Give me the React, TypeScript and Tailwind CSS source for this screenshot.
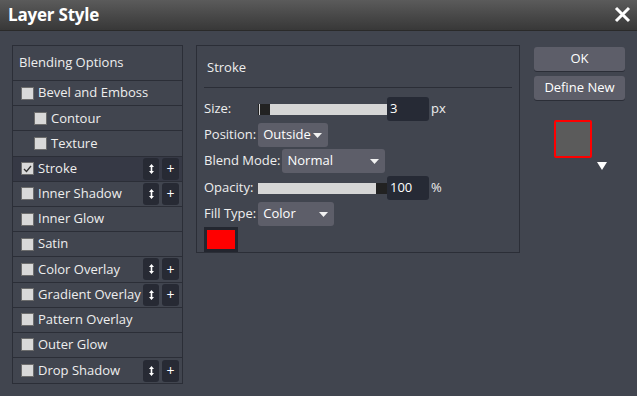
import React from 'react'

type Row = { name: string; indent?: boolean; checked?: boolean; active?: boolean; tools?: boolean }

const rows: Row[] = [
  { name: 'Bevel and Emboss' },
  { name: 'Contour', indent: true },
  { name: 'Texture', indent: true },
  { name: 'Stroke', checked: true, active: true, tools: true },
  { name: 'Inner Shadow', tools: true },
  { name: 'Inner Glow' },
  { name: 'Satin' },
  { name: 'Color Overlay', tools: true },
  { name: 'Gradient Overlay', tools: true },
  { name: 'Pattern Overlay' },
  { name: 'Outer Glow' },
  { name: 'Drop Shadow', tools: true },
]

const Caret = () => (
  <svg width="9" height="5" viewBox="0 0 9 5" className="shrink-0">
    <path d="M0 0h9L4.5 5z" fill="#f2f2f2" />
  </svg>
)

const CheckBox: React.FC<{ checked?: boolean }> = ({ checked }) => (
  <div className="w-[13px] h-[13px] bg-[#d9d9d9] border border-[#6d6d6d] flex items-center justify-center shrink-0">
    {checked && (
      <svg width="9" height="8" viewBox="0 0 9 8">
        <path d="M1 4l2.5 2.5L8 1" stroke="#333" strokeWidth="1.3" fill="none" />
      </svg>
    )}
  </div>
)

const Dropdown: React.FC<{ label: string; w: string }> = ({ label, w }) => (
  <div className={`${w} h-[24px] bg-[#5d5e69] rounded-[3px] flex items-center justify-between pl-[5px] pr-[6px] text-white`}>
    <span>{label}</span>
    <Caret />
  </div>
)

const NumBox: React.FC<{ value: string }> = ({ value }) => (
  <div className="w-[42px] h-[24px] bg-[#262a35] rounded-[3px] flex items-center px-[3px] text-white">{value}</div>
)

export default function App() {
  return (
    <div className="w-[637px] h-[396px] bg-[#41454f] text-[13px] text-[#eeeeee] overflow-hidden" style={{ fontFamily: '"Open Sans", "Noto Sans", sans-serif' }}>
      <div className="h-[31px] bg-gradient-to-b from-[#5b5b5b] to-[#383838] border-b border-[#2a2a2a] flex items-center justify-between pl-[8px] pr-[6px]">
        <span className="text-[17px] font-bold text-white tracking-[-0.2px]">Layer Style</span>
        <svg width="17" height="17" viewBox="0 0 17 17" className="mb-[2px]">
          <path d="M2 2L15 15M15 2L2 15" stroke="#fff" strokeWidth="3" />
        </svg>
      </div>

      <div className="flex items-start pl-[12px] pt-[14px]">
        <div className="w-[171px] border border-[#2b2e37]">
          <div className="h-[35px] flex items-center px-[6px] border-b border-[#2b2e37]">Blending Options</div>
          {rows.map((r) => (
            <div key={r.name} className={`h-[25.2px] flex items-center gap-[4px] border-b border-[#2b2e37] last:border-b-0 ${r.indent ? 'pl-[21px]' : 'pl-[8px]'} ${r.active ? 'bg-[#363945]' : ''}`}>
              <CheckBox checked={r.checked} />
              <span className="flex-1 min-w-0 whitespace-nowrap">{r.name}</span>
              {r.tools && (
                <div className="flex gap-[3px] pr-[3px] shrink-0">
                  <div className="w-[16px] h-[22px] bg-[#272a34] rounded-[3px] flex items-center justify-center">
                    <svg width="5" height="10" viewBox="0 0 5 10">
                      <path d="M2.5 0L5 3H0zM2.5 10L0 7h5zM1.7 3h1.6v4H1.7z" fill="#fff" />
                    </svg>
                  </div>
                  <div className="w-[17px] h-[22px] bg-[#272a34] rounded-[3px] flex items-center justify-center text-white text-[14px]">+</div>
                </div>
              )}
            </div>
          ))}
        </div>

        <div className="ml-[13px] w-[324px] h-[208px] border border-[#2b2e37] px-[7px]">
          <div className="h-[42px] pt-[12px] pl-[3px] border-b border-[#2b2e37]">Stroke</div>
          <div className="flex flex-col gap-[2px] mt-[9px]">
            <div className="flex items-center h-[24px]">
              <span className="w-[54px]">Size:</span>
              <div className="w-[129px] h-[11px] bg-[#d6d6d6] flex">
                <div className="w-[1px] bg-[#222]" />
                <div className="ml-[1px] w-[10px] bg-[#222]" />
              </div>
              <NumBox value="3" />
              <span className="ml-[2px]">px</span>
            </div>
            <div className="flex items-center h-[24px]">
              <span className="mr-[2px]">Position:</span>
              <Dropdown label="Outside" w="w-[70px]" />
            </div>
            <div className="flex items-center h-[24px]">
              <span className="mr-[2px]">Blend Mode:</span>
              <Dropdown label="Normal" w="w-[103px]" />
            </div>
            <div className="flex items-center h-[24px] mt-[1px]">
              <span className="w-[54px]">Opacity:</span>
              <div className="w-[129px] h-[11px] bg-[#d6d6d6] flex justify-end">
                <div className="w-[11px] bg-[#222]" />
              </div>
              <NumBox value="100" />
              <span className="ml-[2px]">%</span>
            </div>
            <div className="flex items-center h-[24px]">
              <span className="mr-[2px]">Fill Type:</span>
              <Dropdown label="Color" w="w-[76px]" />
            </div>
            <div className="w-[34px] h-[25px] bg-[#23262f] p-[3px] -mt-[1px]">
              <div className="w-full h-full bg-[#ff0000]" />
            </div>
          </div>
        </div>

        <div className="ml-[14px] w-[91px] pt-[2px] flex flex-col gap-[5px]">
          <div className="h-[24px] bg-[#5d5e69] rounded-[3px] flex items-center justify-center text-white shadow-[0_1px_0_#2b2e37]">OK</div>
          <div className="h-[24px] bg-[#5d5e69] rounded-[3px] flex items-center justify-center text-white shadow-[0_1px_0_#2b2e37]">Define New</div>
          <div className="relative mt-[15px] ml-[20px] w-[38px] h-[38px] border-2 border-[#ff0000] rounded-[2px] bg-[#5b5b5b]">
            <svg width="10" height="8" viewBox="0 0 10 8" className="absolute left-[41px] top-[40px]">
              <path d="M0 0h10L5 8z" fill="#fff" />
            </svg>
          </div>
        </div>
      </div>
    </div>
  )
}
